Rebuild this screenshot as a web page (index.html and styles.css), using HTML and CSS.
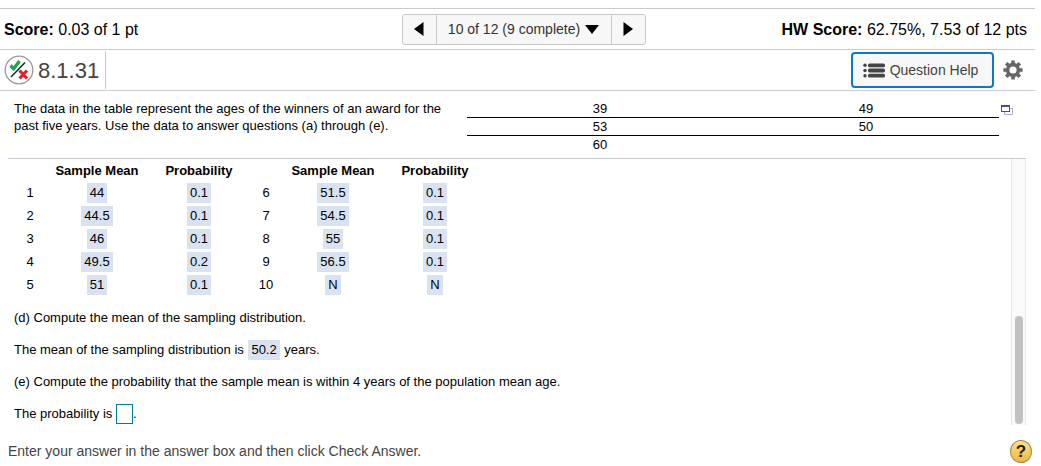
FILE: index.html
```html
<!DOCTYPE html>
<html lang="en">
<head>
    <meta charset="UTF-8">
    <meta name="viewport" content="width=device-width, initial-scale=1.0">
    <title>Homework 8.1.31</title>
    <link rel="stylesheet" href="styles.css">
</head>
<body>
<div class="player">
    <header class="score-bar">
        <div><b>Score:</b> 0.03 of 1 pt</div>
        <nav class="question-nav">
            <button type="button" class="nav-arrow" aria-label="Previous question">
                <svg width="10" height="14" viewBox="0 0 10 14"><path d="M9.5 0v14L0 7z"/></svg>
            </button>
            <button type="button" class="nav-current">
                10 of 12 (9 complete)
                <svg width="14" height="9" viewBox="0 0 14 9"><path d="M0 0h14L7 9z"/></svg>
            </button>
            <button type="button" class="nav-arrow" aria-label="Next question">
                <svg width="10" height="14" viewBox="0 0 10 14"><path d="M.5 0v14L10 7z"/></svg>
            </button>
        </nav>
        <div class="hw-score"><b>HW Score:</b> 62.75%, 7.53 of 12 pts</div>
    </header>

    <div class="title-bar">
        <h1 class="question-title">
            <svg width="30" height="30" viewBox="0 0 30 30">
                <circle cx="15" cy="15" r="13.8" fill="#fff" stroke="#999" stroke-width="1.3"/>
                <path d="M7 22L21 7.500" stroke="#222" stroke-width="1.5"/>
                <path d="M6.500 10.500l3.200 3.200L15.500 6" fill="none" stroke="#16a84e" stroke-width="3.2"/>
                <path d="M15.500 15.500l7.500 8M23 15.500l-7.500 8" stroke="#e0202b" stroke-width="3.2"/>
            </svg>
            8.1.31
        </h1>
        <div class="tools">
            <button type="button" class="help-button">
                <svg width="22" height="15" viewBox="0 0 22 15" fill="#444">
                    <circle cx="2" cy="2.3" r="1.7"/><circle cx="2" cy="7.5" r="1.7"/><circle cx="2" cy="12.7" r="1.7"/>
                    <rect x="5" y="0.5" width="17" height="3.8" rx="1.6"/>
                    <rect x="5" y="5.6" width="17" height="3.8" rx="1.6"/>
                    <rect x="5" y="10.7" width="17" height="3.8" rx="1.6"/>
                </svg>
                Question Help
            </button>
            <button type="button" class="icon-button" aria-label="Settings">
                <svg width="20" height="20" viewBox="0 0 20 20">
                    <circle cx="10" cy="10" r="5.4" fill="none" stroke="#666" stroke-width="3.6"/>
                    <g stroke="#666" stroke-width="3.6">
                        <path d="M10 .4v3.4M10 16.2v3.4M.4 10h3.4M16.2 10h3.4"/>
                        <path d="M3.2 3.2l2.4 2.4M14.4 14.4l2.4 2.4M3.2 16.8l2.4-2.4M14.4 5.6l2.4-2.4"/>
                    </g>
                </svg>
            </button>
        </div>
    </div>

    <section class="stem">
        <p class="stem-text">The data in the table represent the ages of the winners of an award for the past five years. Use the data to answer questions (a) through (e).</p>
        <table class="ages">
            <tr><td>39</td><td>49</td></tr>
            <tr><td>53</td><td>50</td></tr>
            <tr><td>60</td><td></td></tr>
        </table>
        <button type="button" class="icon-button popup" aria-label="Open data">
            <svg width="12" height="10" viewBox="0 0 12 10" fill="none">
                <path d="M9 3.5h2.5v6h-8V7" stroke="#aaaadd"/>
                <rect x=".5" y=".5" width="8" height="6" fill="#fff" stroke="#4a4aa5"/>
                <path d="M0 1h9" stroke="#4a4aa5" stroke-width="2"/>
            </svg>
        </button>
    </section>

    <main class="work">
        <div class="work-content">
            <table class="samples">
                <tr><th class="num"></th><th>Sample Mean</th><th>Probability</th><th class="num"></th><th>Sample Mean</th><th>Probability</th></tr>
                <tr><td>1</td><td><span class="given">44</span></td><td><span class="given">0.1</span></td><td>6</td><td><span class="given">51.5</span></td><td><span class="given">0.1</span></td></tr>
                <tr><td>2</td><td><span class="given">44.5</span></td><td><span class="given">0.1</span></td><td>7</td><td><span class="given">54.5</span></td><td><span class="given">0.1</span></td></tr>
                <tr><td>3</td><td><span class="given">46</span></td><td><span class="given">0.1</span></td><td>8</td><td><span class="given">55</span></td><td><span class="given">0.1</span></td></tr>
                <tr><td>4</td><td><span class="given">49.5</span></td><td><span class="given">0.2</span></td><td>9</td><td><span class="given">56.5</span></td><td><span class="given">0.1</span></td></tr>
                <tr><td>5</td><td><span class="given">51</span></td><td><span class="given">0.1</span></td><td>10</td><td><span class="given">N</span></td><td><span class="given">N</span></td></tr>
            </table>
            <p>(d) Compute the mean of the sampling distribution.</p>
            <p>The mean of the sampling distribution is <span class="given result">50.2</span> years.</p>
            <p>(e) Compute the probability that the sample mean is within 4 years of the population mean age.</p>
            <p><label for="probability">The probability is</label> <input type="text" id="probability" class="answer">.</p>
        </div>
        <div class="scroll-track"><div class="scroll-thumb"></div></div>
    </main>

    <footer class="footer">
        <span>Enter your answer in the answer box and then click Check Answer.</span>
        <button type="button" class="info-button" aria-label="Help">?</button>
    </footer>
</div>
</body>
</html>
```

FILE: styles.css
```css
* {
    box-sizing: border-box;
}
body {
    margin: 0;
    padding-top: 8px;
    font-family: "Liberation Sans", Arial, sans-serif;
    font-size: 13px;
    line-height: 17px;
    color: #000;
    background-color: #fff;
}
p {
    margin: 0;
}
button {
    font-family: inherit;
    cursor: pointer;
}
table {
    border-collapse: collapse;
    text-align: center;
}
svg {
    display: block;
    flex: none;
}
.player {
    margin-right: 6px;
    border-top: 1px solid #c6cada;
}

/* score and question navigation */
.score-bar {
    display: grid;
    grid-template-columns: 1fr auto 1fr;
    align-items: center;
    height: 41px;
    padding: 0 8px 0 4px;
    font-size: 16px;
    border-bottom: 1px solid #c6cada;
}
.question-nav {
    display: flex;
    height: 31px;
    margin-left: 16px;
    background-color: #f7f7f7;
    border: 1px solid #c8c8c8;
    border-radius: 3px;
}
.question-nav button {
    display: flex;
    align-items: center;
    justify-content: center;
    gap: 5px;
    padding: 0;
    font-size: 14px;
    color: #333;
    background: none;
    border: none;
}
.question-nav .nav-arrow {
    width: 33px;
}
.question-nav .nav-current {
    width: 176px;
    border-left: 1px solid #c8c8c8;
    border-right: 1px solid #c8c8c8;
}
.question-nav svg {
    fill: #000;
}
.hw-score {
    text-align: right;
}

/* question number and tools */
.title-bar {
    display: flex;
    align-items: center;
    justify-content: space-between;
    height: 41px;
    border-bottom: 1px solid #c6cada;
}
.question-title {
    display: flex;
    align-items: center;
    gap: 4px;
    height: 38px;
    margin: 0;
    padding: 0 6px 0 4px;
    font-size: 22px;
    font-weight: normal;
    color: #444;
    border-right: 1px solid #c6cada;
}
.tools {
    display: flex;
    align-items: center;
    gap: 9px;
    padding-right: 12px;
}
.help-button {
    display: flex;
    align-items: center;
    justify-content: center;
    gap: 5px;
    width: 143px;
    height: 36px;
    padding: 0 4px 0 0;
    font-size: 14px;
    color: #444;
    background-color: #f7f7f7;
    border: 2px solid #0d78c8;
    border-radius: 4px;
}
.icon-button {
    padding: 0;
    background: none;
    border: none;
}

/* question statement */
.stem {
    display: flex;
    align-items: flex-start;
    height: 67px;
    padding: 9px 22px 0 14px;
}
.stem-text {
    flex: 0 0 453px;
    padding-right: 16px;
}
.ages {
    flex: 1;
    table-layout: fixed;
}
.ages td {
    height: 17px;
    padding: 0;
    border-bottom: 1px solid #000;
}
.ages tr:last-child td {
    border-bottom: none;
}
.popup {
    margin: 5px 0 0 2px;
}

/* scrolling work area */
.work {
    display: flex;
    height: 267px;
    margin: 0 9px 0 8px;
    border-top: 1px solid #c6cada;
}
.work-content {
    flex: 1;
    padding-left: 6px;
}
.work-content p {
    height: 20px;
    margin-top: 12px;
    line-height: 20px;
}
.samples {
    table-layout: fixed;
    width: 472px;
    margin-bottom: 11px;
}
.samples th {
    height: 22px;
    padding: 0;
}
.samples td {
    height: 23px;
    padding: 0;
}
.samples .num {
    width: 32px;
}
.given {
    display: inline-block;
    padding: 0 3px;
    line-height: 20px;
    vertical-align: middle;
    background-color: #d9e2f1;
}
.result {
    margin: 0 1px;
    vertical-align: top;
}
.answer {
    width: 17px;
    height: 20px;
    padding: 0 2px;
    font: inherit;
    vertical-align: top;
    border: 1px solid #007b9c;
}
.scroll-track {
    display: flex;
    align-items: flex-end;
    justify-content: center;
    width: 15px;
    padding-bottom: 1px;
    background-color: #fafafa;
    border-left: 1px solid #e6e6e6;
    border-right: 1px solid #e6e6e6;
}
.scroll-thumb {
    width: 8px;
    height: 108px;
    background-color: #c1c1c1;
    border-radius: 4px;
}

/* bottom instruction */
.footer {
    display: flex;
    align-items: center;
    justify-content: space-between;
    padding: 15px 3px 2px 8px;
    font-size: 14px;
    color: #444;
}
.info-button {
    width: 22px;
    height: 23px;
    padding: 0;
    font-size: 17px;
    font-weight: bold;
    line-height: 20px;
    color: #222;
    background: linear-gradient(#fbe08a, #f3b73e);
    border: 1px solid #a48a55;
    border-radius: 50%;
}
```
